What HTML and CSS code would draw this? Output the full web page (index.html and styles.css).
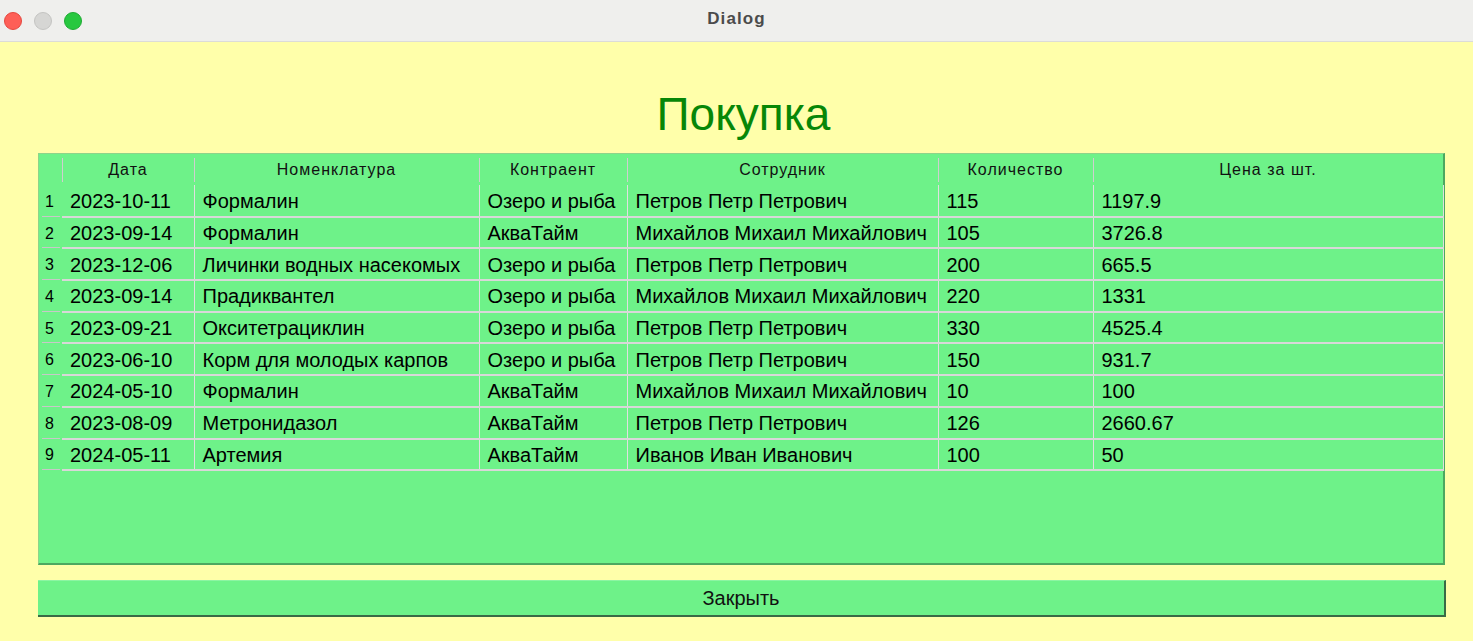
FILE: index.html
```html
<!DOCTYPE html>
<html lang="ru">
<head>
<meta charset="utf-8">
<title>Dialog</title>
<link rel="stylesheet" href="styles.css">
</head>
<body>
<div class="window">
  <div class="titlebar">
    <div class="lights">
      <span class="light red"></span>
      <span class="light gray"></span>
      <span class="light green"></span>
    </div>
    <div class="wtitle">Dialog</div>
  </div>
  <div class="content">
    <h1 class="heading">Покупка</h1>
    <div class="tablebox">
      <table class="grid">
        <colgroup>
          <col class="c0"><col class="c1"><col class="c2"><col class="c3"><col class="c4"><col class="c5"><col class="c6">
        </colgroup>
        <thead>
          <tr>
            <th class="corner"></th>
            <th>Дата</th>
            <th>Номенклатура</th>
            <th>Контраент</th>
            <th>Сотрудник</th>
            <th>Количество</th>
            <th>Цена за шт.</th>
          </tr>
        </thead>
        <tbody>
          <tr><td class="rn">1</td><td>2023-10-11</td><td>Формалин</td><td>Озеро и рыба</td><td>Петров Петр Петрович</td><td>115</td><td>1197.9</td></tr>
          <tr><td class="rn">2</td><td>2023-09-14</td><td>Формалин</td><td>АкваТайм</td><td>Михайлов Михаил Михайлович</td><td>105</td><td>3726.8</td></tr>
          <tr><td class="rn">3</td><td>2023-12-06</td><td>Личинки водных насекомых</td><td>Озеро и рыба</td><td>Петров Петр Петрович</td><td>200</td><td>665.5</td></tr>
          <tr><td class="rn">4</td><td>2023-09-14</td><td>Прадиквантел</td><td>Озеро и рыба</td><td>Михайлов Михаил Михайлович</td><td>220</td><td>1331</td></tr>
          <tr><td class="rn">5</td><td>2023-09-21</td><td>Окситетрациклин</td><td>Озеро и рыба</td><td>Петров Петр Петрович</td><td>330</td><td>4525.4</td></tr>
          <tr><td class="rn">6</td><td>2023-06-10</td><td>Корм для молодых карпов</td><td>Озеро и рыба</td><td>Петров Петр Петрович</td><td>150</td><td>931.7</td></tr>
          <tr><td class="rn">7</td><td>2024-05-10</td><td>Формалин</td><td>АкваТайм</td><td>Михайлов Михаил Михайлович</td><td>10</td><td>100</td></tr>
          <tr><td class="rn">8</td><td>2023-08-09</td><td>Метронидазол</td><td>АкваТайм</td><td>Петров Петр Петрович</td><td>126</td><td>2660.67</td></tr>
          <tr><td class="rn">9</td><td>2024-05-11</td><td>Артемия</td><td>АкваТайм</td><td>Иванов Иван Иванович</td><td>100</td><td>50</td></tr>
        </tbody>
      </table>
    </div>
    <button class="close">Закрыть</button>
  </div>
</div>
</body>
</html>
```

FILE: styles.css
```css
* { box-sizing: border-box; }
html, body { margin: 0; padding: 0; }
body {
  width: 1473px;
  height: 641px;
  overflow: hidden;
  font-family: "Liberation Sans", Arial, sans-serif;
  background: #ffffaa;
}
.window {
  width: 1473px;
  height: 641px;
  display: flex;
  flex-direction: column;
}
.titlebar {
  height: 42px;
  flex: none;
  background: #efefed;
  border-bottom: 1px solid #dcdcd8;
  display: flex;
  align-items: center;
  position: relative;
}
.lights {
  display: flex;
  gap: 12px;
  padding-left: 4px;
  padding-top: 1px;
}
.light {
  width: 18px;
  height: 18px;
  border-radius: 50%;
  display: block;
}
.light.red { background: #fe5f57; border: 1px solid #e5473f; }
.light.gray { background: #d6d6d4; border: 1px solid #c4c4c2; }
.light.green { background: #28c840; border: 1px solid #1fab34; }
.wtitle {
  position: absolute;
  left: 0;
  right: 0;
  top: 0;
  bottom: 4px;
  display: flex;
  align-items: center;
  justify-content: center;
  font-size: 17px;
  letter-spacing: 1.1px;
  font-weight: bold;
  color: #4b4b4b;
}
.content {
  flex: 1;
  background: #ffffaa;
  padding: 0 28px 0 38px;
  display: flex;
  flex-direction: column;
}
.heading {
  margin: 43px 0 0 0;
  height: 68px;
  font-size: 46px;
  font-weight: normal;
  color: #078707;
  text-align: center;
  line-height: 58px;
  padding-left: 4px;
}
.tablebox {
  width: 1407px;
  height: 412px;
  background: #6ef289;
  border-top: 1px solid #8ed48a;
  border-left: 1px solid #8ed48a;
  border-right: 2px solid #4da860;
  border-bottom: 2px solid #4da860;
}
.grid {
  border-collapse: collapse;
  table-layout: fixed;
  width: 1404px;
}
.c0 { width: 23px; }
.c1 { width: 132px; }
.c2 { width: 285px; }
.c3 { width: 148px; }
.c4 { width: 311px; }
.c5 { width: 155px; }
.c6 { width: 350px; }
.grid th {
  height: 31px;
  font-size: 16px;
  letter-spacing: 1px;
  font-weight: normal;
  color: #111;
  text-align: center;
  padding: 0 4px;
  position: relative;
  white-space: nowrap;
}
.grid th::before {
  content: "";
  position: absolute;
  left: 0;
  top: 4px;
  bottom: 3px;
  width: 1px;
  background: #cfcfcf;
}
.grid th.corner::before { display: none; }
.grid td {
  height: 31.7px;
  font-size: 20px;
  color: #000;
  padding: 2px 0 0 8px;
  white-space: nowrap;
  overflow: hidden;
  border-bottom: 2px solid #d8d8d8;
  border-left: 1px solid #e0e0e0;
  border-right: 1px solid #e0e0e0;
}
.grid td:nth-child(2) { border-left: none; }
.grid td.rn {
  font-size: 16px;
  padding-left: 6px;
  border: none;
  position: relative;
}
.grid td.rn::after {
  content: "";
  position: absolute;
  left: 3px;
  right: 2px;
  bottom: -1px;
  height: 2px;
  background: #c8c8c8;
}
.close {
  margin-top: 15px;
  width: 1408px;
  height: 37px;
  background: #6ef289;
  border: none;
  border-top: 1px solid #8cf5a3;
  border-right: 2px solid #3a6b45;
  border-bottom: 2px solid #3a6b45;
  font-family: "Liberation Sans", Arial, sans-serif;
  font-size: 20px;
  color: #111;
  padding: 0;
}
```
